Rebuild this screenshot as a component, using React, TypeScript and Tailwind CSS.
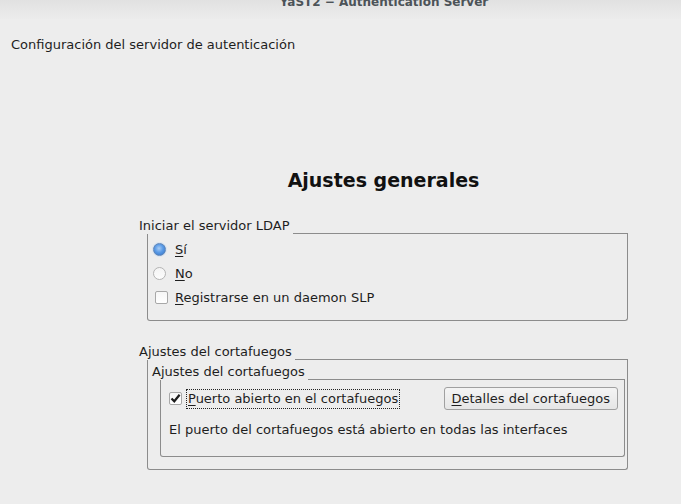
import React from 'react'

const font = { fontFamily: '"DejaVu Sans", "Liberation Sans", sans-serif' }

function Radio({ checked }: { checked?: boolean }) {
  return checked ? (
    <span className="inline-block h-[13px] w-[13px] rounded-full border border-[#5f86b8] bg-[radial-gradient(circle_at_45%_40%,#a9cdf5_0%,#5b9be6_45%,#2f6fc4_100%)] shadow-[0_0_0_1px_#d8e4f2]" />
  ) : (
    <span className="inline-block h-[13px] w-[13px] rounded-full border border-[#b4b4b4] bg-[linear-gradient(#f4f4f4,#fcfcfc)]" />
  )
}

function Check({ checked }: { checked?: boolean }) {
  return (
    <span className="relative inline-block h-[13px] w-[13px] rounded-[2px] border border-[#a8a8a8] bg-[linear-gradient(#f6f6f6,#ffffff)]">
      {checked && (
        <svg viewBox="0 0 11 11" className="absolute left-0 top-0 h-[11px] w-[11px]">
          <path d="M1.5 5.5 L4.3 8.3 L9.6 1.8" fill="none" stroke="#1c1c1c" strokeWidth="2.2" />
        </svg>
      )}
    </span>
  )
}

function U({ children }: { children: React.ReactNode }) {
  return <span className="underline decoration-1 underline-offset-2">{children}</span>
}

export default function App() {
  return (
    <div className="h-[504px] w-[681px] overflow-hidden bg-[#ededed] text-[13px] leading-[16px] text-[#1e1e1e]" style={font}>
      <div className="h-[25px] bg-[linear-gradient(#dedede,#ececec)]">
        <div className="mt-[-6px] pl-[87px] text-center text-[12px] font-bold text-[#4c5358]">YaST2 − Authentication Server</div>
      </div>

      <div className="mt-[18px] pl-[11px]">Configuración del servidor de autenticación</div>

      <div className="ml-[139px] mr-[53px] mt-[116px]">
        <div className="text-center text-[19px] font-bold leading-[22px] text-[#111]">Ajustes generales</div>

        <div className="mt-[27px]">
          <div className="flex items-end">
            <span className="pr-[3px]">Iniciar el servidor LDAP</span>
            <div className="flex-1 border-b border-[#8c8c8c]" />
          </div>
          <div className="ml-[8px] h-[87px] rounded-b-[3px] border-x border-b border-[#8c8c8c] pl-[5px] pt-[7px]">
            <div className="flex h-[17px] items-center gap-[9px]"><Radio checked /><span><U>S</U>í</span></div>
            <div className="mt-[7px] flex h-[17px] items-center gap-[9px]"><Radio /><span><U>N</U>o</span></div>
            <div className="mt-[7px] flex h-[17px] items-center gap-[7px] pl-[2px]"><Check /><span><U>R</U>egistrarse en un daemon SLP</span></div>
          </div>
        </div>

        <div className="mt-[23px]">
          <div className="flex items-end">
            <span className="pr-[3px]">Ajustes del cortafuegos</span>
            <div className="flex-1 border-b border-[#8c8c8c]" />
          </div>
          <div className="ml-[8px] h-[110px] rounded-b-[3px] border-x border-b border-[#8c8c8c] pr-[2px] pl-[4px] pt-[4px]">
            <div className="flex items-end">
              <span className="pr-[3px]">Ajustes del cortafuegos</span>
              <div className="flex-1 border-b border-[#8c8c8c]" />
            </div>
            <div className="ml-[8px] h-[77px] rounded-b-[3px] border-x border-b border-[#8c8c8c] pl-[8px] pr-[6px] pt-[7px]">
              <div className="flex items-center">
                <Check checked />
                <span className="ml-[4px] border border-dotted border-[#222] px-[1px] py-[1px]"><U>P</U>uerto abierto en el cortafuegos</span>
                <div className="flex-1" />
                <button className="h-[23px] rounded-[3px] border border-[#a0a0a0] bg-[linear-gradient(#f4f4f4,#e6e6e6)] px-[7px] text-[13px]"><U>D</U>etalles del cortafuegos</button>
              </div>
              <div className="mt-[12px]">El puerto del cortafuegos está abierto en todas las interfaces</div>
            </div>
          </div>
        </div>
      </div>
    </div>
  )
}
